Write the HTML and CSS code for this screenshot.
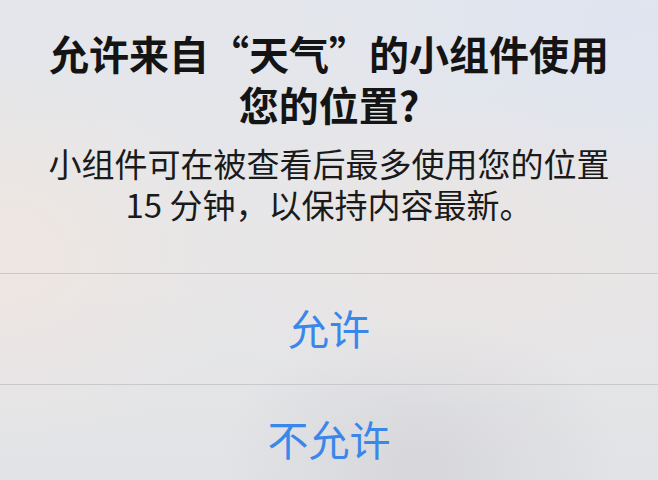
FILE: index.html
```html
<!DOCTYPE html>
<html lang="zh-CN">
<head>
    <meta charset="utf-8">
    <title>位置权限</title>
    <meta name="viewport" content="width=device-width, initial-scale=1.0">
    <link rel="stylesheet" href="styles.css">
</head>
<body>
    <div class="alert">
        <div class="pesan">
            <h2 class="judul">允许来自“天气”的小组件使用<br>您的位置?</h2>
            <p class="keterangan">小组件可在被查看后最多使用您的位置<br>15 分钟，以保持内容最新。</p>
        </div>
        <div class="tombol">允许</div>
        <div class="tombol">不允许</div>
    </div>
</body>
</html>
```

FILE: styles.css
```css
html, body {
    margin: 0;
    height: 100%;
    overflow: hidden;
}

body {
    font-family: "Noto Sans CJK SC", "Noto Sans", sans-serif;
    background-color: #e5e6e9;
    /* efek blur di belakang alert */
    background-image:
        radial-gradient(ellipse 260px 200px at 0px 250px, rgba(240, 230, 225, 0.9), transparent),
        radial-gradient(ellipse 300px 160px at 470px 250px, rgba(236, 228, 226, 0.8), transparent),
        radial-gradient(ellipse 320px 200px at 620px 20px, rgba(222, 228, 240, 0.9), transparent),
        radial-gradient(ellipse 200px 160px at 420px 470px, rgba(212, 212, 216, 0.8), transparent),
        linear-gradient(180deg, #e4e6ec 0%, #e6e6e8 60%, #e2e3e6 100%);
}

.alert {
    width: 658px;
}

.pesan {
    padding: 28px 20px 48px;
    text-align: center;
    color: #141414;
}

.judul {
    margin: 0;
    font-size: 40px;
    line-height: 51px;
    font-weight: 600;
}

.keterangan {
    margin: 13px 0 0;
    font-size: 33px;
    line-height: 41px;
    font-weight: 400;
    color: #1a1a1a;
}

.tombol {
    height: 111px;
    display: flex;
    justify-content: center;
    align-items: center;
    border-top: 1px solid #c9c9cb;
    font-size: 41px;
    color: #3a87ec;
    padding-bottom: 4px;
    box-sizing: border-box;
}
```
